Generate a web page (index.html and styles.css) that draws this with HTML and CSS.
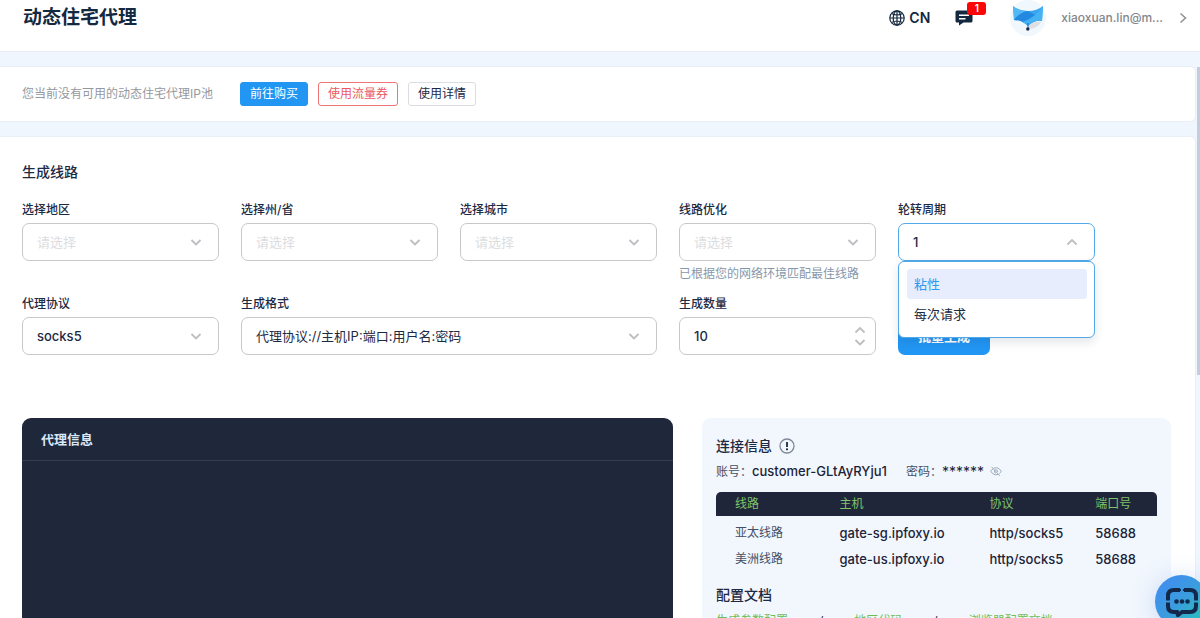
FILE: index.html
```html
<!DOCTYPE html>
<html lang="zh-CN">
<head>
<meta charset="utf-8">
<meta name="viewport" content="width=device-width, initial-scale=1">
<title>动态住宅代理</title>
<link rel="stylesheet" href="styles.css">
</head>
<body>
<svg class="sprite" aria-hidden="true">
  <symbol id="chevron" viewBox="0 0 12 12"><path d="M1.500 4l4.500 4.500L10.500 4" fill="none" stroke="currentColor" stroke-width="1.800"/></symbol>
  <symbol id="chevron-up" viewBox="0 0 12 12"><path d="M1.500 8.500L6 4l4.500 4.500" fill="none" stroke="currentColor" stroke-width="1.800"/></symbol>
</svg>

<header class="topbar">
  <h1 class="topbar-title">动态住宅代理</h1>
  <button class="lang" type="button">
    <svg class="icon-globe" viewBox="0 0 16 16" fill="none" stroke="currentColor" stroke-width="1.2" aria-hidden="true"><circle cx="8" cy="8" r="7.2"/><ellipse cx="8" cy="8" rx="3.8" ry="7.2"/><path d="M8 .8v14.4M.8 8h14.4M2.500 3.500q5.500 3 11 0M2.500 12.500q5.500-3 11 0"/></svg>
    <span>CN</span>
  </button>
  <button class="messages" type="button" aria-label="消息">
    <svg class="icon-message" viewBox="0 0 18 16" aria-hidden="true"><path d="M2 .5h14a1.500 1.500 0 0 1 1.500 1.500V11a1.500 1.500 0 0 1-1.500 1.500H8.500L4 15.500v-3H2A1.500 1.500 0 0 1 .5 11V2A1.500 1.500 0 0 1 2 .5z" fill="currentColor"/><path d="M4 5.300h10M4 8.700h6.500" stroke="#fff" stroke-width="1.500"/></svg>
    <span class="badge">1</span>
  </button>
  <button class="account" type="button">
    <span class="avatar">
      <svg class="icon-fox" viewBox="0 0 30 26" aria-hidden="true">
        <path d="M0 1q6 5 15 5 9 0 15-5l-1 15q-8-1-14 5Q9 15 1 15z" fill="#39a5f0"/>
        <path d="M0 1q5 5 14 5-5 2-13 9z" fill="#52b7f5"/>
        <path d="M1 15Q6 8 14 6q8 3 14 9-7 0-13 6Q9 15 1 15z" fill="#2389e0"/>
        <path d="M30 1l-1 15q-8-1-14 5-3-3-6-4Q22 13 30 1z" fill="#45b2f3"/>
        <path d="M15 21q6-5 13-4-3 6-12 7z" fill="#dedfe3"/>
        <path d="M15 18v6" stroke="#1f6fc0" stroke-width="1"/>
        <circle cx="14.800" cy="24" r="1.700" fill="#1c2946"/>
      </svg>
    </span>
    <span class="account-name">xiaoxuan.lin@m...</span>
    <svg class="icon-next" viewBox="0 0 8 12" fill="none" stroke="currentColor" stroke-width="1.600" aria-hidden="true"><path d="M1.500 1.500L6.500 6l-5 4.500"/></svg>
  </button>
</header>

<main class="content">
  <section class="card notice">
    <p class="notice-text">您当前没有可用的动态住宅代理IP池</p>
    <button class="btn btn-primary" type="button">前往购买</button>
    <button class="btn btn-danger" type="button">使用流量券</button>
    <button class="btn" type="button">使用详情</button>
  </section>

  <section class="card generator">
    <h2 class="heading">生成线路</h2>
    <form class="fields">
      <div class="field">
        <label for="region">选择地区</label>
        <div class="control"><select id="region" class="empty"><option>请选择</option></select><svg class="arrow" aria-hidden="true"><use href="#chevron"/></svg></div>
      </div>
      <div class="field">
        <label for="state">选择州/省</label>
        <div class="control"><select id="state" class="empty"><option>请选择</option></select><svg class="arrow" aria-hidden="true"><use href="#chevron"/></svg></div>
      </div>
      <div class="field">
        <label for="city">选择城市</label>
        <div class="control"><select id="city" class="empty"><option>请选择</option></select><svg class="arrow" aria-hidden="true"><use href="#chevron"/></svg></div>
      </div>
      <div class="field">
        <label for="line">线路优化</label>
        <div class="control"><select id="line" class="empty"><option>请选择</option></select><svg class="arrow" aria-hidden="true"><use href="#chevron"/></svg></div>
        <p class="hint">已根据您的网络环境匹配最佳线路</p>
      </div>
      <div class="field">
        <label for="cycle">轮转周期</label>
        <div class="control control-open">
          <input id="cycle" type="text" value="1" role="combobox" aria-expanded="true" aria-controls="cycle-list"><svg class="arrow" aria-hidden="true"><use href="#chevron-up"/></svg>
          <ul id="cycle-list" class="menu" role="listbox">
            <li class="menu-item active" role="option" aria-selected="true">粘性</li>
            <li class="menu-item" role="option" aria-selected="false">每次请求</li>
          </ul>
        </div>
      </div>
      <div class="field">
        <label for="protocol">代理协议</label>
        <div class="control"><select id="protocol"><option>socks5</option></select><svg class="arrow" aria-hidden="true"><use href="#chevron"/></svg></div>
      </div>
      <div class="field field-wide">
        <label for="format">生成格式</label>
        <div class="control"><select id="format"><option>代理协议://主机IP:端口:用户名:密码</option></select><svg class="arrow" aria-hidden="true"><use href="#chevron"/></svg></div>
      </div>
      <div class="field">
        <label for="count">生成数量</label>
        <div class="control"><input id="count" type="number" value="10"><span class="spinner" aria-hidden="true"><svg><use href="#chevron-up"/></svg><svg><use href="#chevron"/></svg></span></div>
      </div>
      <button class="submit" type="button">批量生成</button>
    </form>

    <div class="panels">
      <section class="console">
        <h3 class="console-title">代理信息</h3>
      </section>
      <section class="info">
        <h2 class="heading info-heading">连接信息
          <svg class="icon-info" viewBox="0 0 16 16" aria-hidden="true"><circle cx="8" cy="8" r="7" fill="none" stroke="#7f8896" stroke-width="1.300"/><path d="M8 4v5" stroke="#1e2739" stroke-width="1.800"/><circle cx="8" cy="11.300" r="1.100" fill="#1e2739"/></svg>
        </h2>
        <div class="credentials">
          <span>账号：<b>customer-GLtAyRYju1</b></span>
          <span class="password">密码：<b class="mask">******</b>
            <button class="reveal" type="button" aria-label="显示密码"><svg viewBox="0 0 16 14" fill="none" stroke="currentColor" aria-hidden="true"><path d="M2 1l11 12M5 3q6-2.500 10 4-1 2-2.500 3M4 4Q2 5 1 7q4 6.500 10 4M7 5q3-.5 3.500 3M6 6q-1 3 2 3.500"/></svg></button>
          </span>
        </div>
        <table class="hosts">
          <thead><tr><th>线路</th><th>主机</th><th>协议</th><th>端口号</th></tr></thead>
          <tbody>
            <tr><td>亚太线路</td><td>gate-sg.ipfoxy.io</td><td>http/socks5</td><td>58688</td></tr>
            <tr><td>美洲线路</td><td>gate-us.ipfoxy.io</td><td>http/socks5</td><td>58688</td></tr>
          </tbody>
        </table>
        <h2 class="heading">配置文档</h2>
        <nav class="docs">
          <a href="#params">生成参数配置</a><span>/</span><a href="#codes">地区代码</a><span>/</span><a href="#browser">浏览器配置文档</a>
        </nav>
      </section>
    </div>
  </section>
  <div class="scroll-thumb"></div>
</main>

<button class="chat" type="button" aria-label="在线客服">
  <svg viewBox="0 0 34 30" aria-hidden="true"><path d="M15 3H9Q3 3 3 9v3M19 3h6q6 0 6 6v3M3 17v2q0 6 6 6h3l1 3 4-3h8q6 0 6-6v-2" fill="none" stroke="#13294b" stroke-width="4"/><path d="M1 12.500h4M29 12.500h4M1 16.500h4M29 16.500h4M14 3h2M18 3h2" stroke="#13294b" stroke-width="2"/><g fill="#13294b"><circle cx="11.500" cy="14.500" r="2.300"/><circle cx="17" cy="14.500" r="2.300"/><circle cx="22.500" cy="14.500" r="2.300"/></g></svg>
</button>
</body>
</html>
```

FILE: styles.css
```css
* {
  box-sizing: border-box;
}

body {
  margin: 0;
  height: 100vh;
  display: flex;
  flex-direction: column;
  overflow: hidden;
  background: #f0f6fd;
  color: #1c2a44;
  font-family: Inter, "Noto Sans CJK SC", sans-serif;
  font-size: 12px;
  line-height: 16px;
}

h1, h2, h3, p, ul {
  margin: 0;
  padding: 0;
}

button, input, select {
  font: inherit;
  color: inherit;
}

button {
  padding: 0;
  border: 0;
  background: none;
  cursor: pointer;
}

.sprite {
  display: none;
}

/* Top bar */
.topbar {
  flex: none;
  display: flex;
  align-items: center;
  height: 52px;
  padding: 0 13px 15px 23px;
  background: #fff;
  border-bottom: 1px solid #e9eef4;
}

.topbar-title {
  flex: 1;
  font-size: 19px;
  line-height: 28px;
  font-weight: 700;
  color: #14283f;
}

.lang {
  display: flex;
  align-items: center;
  gap: 4px;
  font-size: 14px;
  font-weight: 600;
  color: #14283f;
}

.icon-globe {
  width: 16px;
  height: 16px;
}

.messages {
  position: relative;
  margin: 0 37px 0 25px;
  height: 16px;
  color: #14283f;
}

.icon-message {
  display: block;
  width: 18px;
  height: 16px;
}

.badge {
  position: absolute;
  top: -8px;
  left: 12px;
  width: 19px;
  height: 13px;
  border-radius: 3px;
  background: #fb0506;
  color: #fff;
  font-size: 10px;
  font-weight: 600;
  line-height: 13px;
}

.account {
  display: flex;
  align-items: center;
}

.avatar {
  display: grid;
  place-items: center;
  width: 36px;
  height: 36px;
  margin-right: 15px;
  border-radius: 50%;
  background: #f0f7fd;
}

.icon-fox {
  width: 30px;
  height: 26px;
}

.account-name {
  margin-right: 16px;
  font-weight: 500;
  color: #84878d;
}

.icon-next {
  width: 8px;
  height: 12px;
  color: #8f9297;
}

/* Content */
.content {
  position: relative;
  flex: 1;
  min-height: 0;
  padding: 14px 4px 0 0;
  overflow: hidden;
}

.scroll-thumb {
  position: absolute;
  top: 15px;
  right: 0;
  width: 3px;
  height: 308px;
  background: #c5ccdb;
}

.card {
  background: #fff;
  border: 1px solid #e9eff7;
  border-left: 0;
  border-radius: 0 6px 6px 0;
}

.notice {
  display: flex;
  align-items: center;
  gap: 10px;
  height: 56px;
  margin-bottom: 14px;
  padding-left: 22px;
}

.notice-text {
  margin-right: 17px;
  color: #95989d;
}

.btn {
  height: 24px;
  padding: 0 9px;
  border: 1px solid #dadde2;
  border-radius: 3px;
  line-height: 20px;
}

.btn-primary {
  background: #2196f3;
  border-color: #2196f3;
  color: #fff;
}

.btn-danger {
  border-color: #f07478;
  color: #ea5960;
}

.generator {
  padding: 25px 24px 0 22px;
}

.heading {
  font-size: 14px;
  line-height: 20px;
  font-weight: 500;
}

/* Form */
.fields {
  display: grid;
  grid-template-columns: repeat(5, minmax(0, 1fr));
  gap: 14px 22px;
  margin: 20px 76px 63px 0;
}

.field-wide {
  grid-column: span 2;
}

.field label {
  display: block;
  margin-bottom: 5px;
  font-weight: 500;
}

.control {
  position: relative;
  display: grid;
  align-items: center;
}

.control > * {
  grid-area: 1 / 1;
}

.control select,
.control input {
  width: 100%;
  height: 38px;
  padding: 0 34px 0 14px;
  border: 1px solid #c7c8cb;
  border-radius: 7px;
  background: #fff;
  outline: 0;
  appearance: none;
  font-size: 13px;
  font-weight: 400;
}

.control input[type="number"] {
  appearance: textfield;
}

#protocol,
#count,
#cycle {
  font-weight: 500;
}

.control .empty {
  color: #dcdde0;
}

.control-open input {
  border-color: #52a9e8;
}

.arrow {
  justify-self: end;
  width: 12px;
  height: 12px;
  margin-right: 17px;
  color: #bcbec2;
  pointer-events: none;
}

.spinner {
  justify-self: end;
  display: grid;
  margin-right: 10px;
  color: #bcbec2;
}

.spinner svg {
  width: 12px;
  height: 12px;
}

.hint {
  margin-top: 5px;
  color: #8797aa;
}

.control > .menu {
  position: absolute;
  top: 100%;
  left: 0;
  right: 0;
  z-index: 2;
  padding: 7px 7px 8px 8px;
  border: 1px solid #52a9e8;
  border-radius: 6px;
  background: #fff;
  box-shadow: 0 4px 10px rgba(30, 40, 70, 0.12);
  list-style: none;
}

.menu-item {
  height: 30px;
  padding: 0 7px;
  border-radius: 3px;
  font-size: 13px;
  line-height: 30px;
}

.menu-item.active {
  background: #e8edfd;
  color: #2c9af0;
}

.submit {
  place-self: end start;
  height: 38px;
  padding: 0 20px;
  border-radius: 7px;
  background: #2196f3;
  color: #fff;
  font-size: 13px;
  font-weight: 700;
}

/* Panels */
.panels {
  display: grid;
  grid-template-columns: minmax(0, 651fr) minmax(0, 469fr);
  gap: 29px;
}

.console {
  min-height: 260px;
  border-radius: 9px 9px 0 0;
  background: #1f283a;
}

.console-title {
  padding: 11px 19px;
  border-bottom: 1px solid #343e50;
  font-size: 13px;
  line-height: 20px;
  color: #d9e7fa;
}

.info {
  padding: 18px 14px 0;
  border-radius: 9px;
  background: #f2f7fd;
}

.info-heading {
  display: flex;
  align-items: center;
  gap: 7px;
}

.icon-info {
  width: 16px;
  height: 16px;
}

.credentials {
  display: flex;
  gap: 19px;
  margin: 7px 0 12px;
  white-space: nowrap;
  color: #465064;
}

.credentials b {
  font-size: 13px;
  font-weight: 500;
  color: #1c2338;
}

.password {
  display: flex;
  align-items: center;
}

.credentials .mask {
  font-size: 14px;
  font-weight: 400;
}

.reveal {
  width: 12px;
  height: 11px;
  margin-left: 6px;
  color: #8290a2;
}

.reveal svg {
  display: block;
}

.hosts {
  width: 100%;
  table-layout: fixed;
  border-spacing: 0;
  margin-bottom: 13px;
}

.hosts th {
  width: 24%;
  height: 24px;
  padding: 0;
  background: #1f2639;
  color: #7fc36c;
  font-weight: 400;
  text-align: left;
}

.hosts th:first-child {
  width: 28%;
  padding-left: 19px;
  border-radius: 5px 0 0 0;
}

.hosts th:nth-child(2) {
  width: 34%;
}

.hosts th:last-child {
  width: 14%;
  border-radius: 0 5px 0 0;
}

.hosts td {
  height: 26px;
  padding: 0;
  font-weight: 500;
  font-size: 13px;
  color: #1c2338;
}

.hosts td:first-child {
  padding-left: 19px;
  font-weight: 400;
  font-size: 12px;
  color: #465064;
}

.hosts tbody::before {
  content: "";
  display: block;
  height: 4px;
}

.docs {
  display: flex;
  gap: 31px;
  margin-top: 8px;
  white-space: nowrap;
}

.docs a {
  color: #6fbd5a;
  text-decoration: none;
}

/* Floating chat button */
.chat {
  position: fixed;
  right: -8px;
  bottom: -10px;
  display: grid;
  place-items: center;
  width: 53px;
  height: 53px;
  border-radius: 50%;
  background: linear-gradient(135deg, #4389f5, #3a9ddd 50%, #22cdb0);
  box-shadow: 0 2px 24px rgba(80, 130, 240, 0.25);
}

.chat svg {
  width: 34px;
  height: 30px;
}
```
